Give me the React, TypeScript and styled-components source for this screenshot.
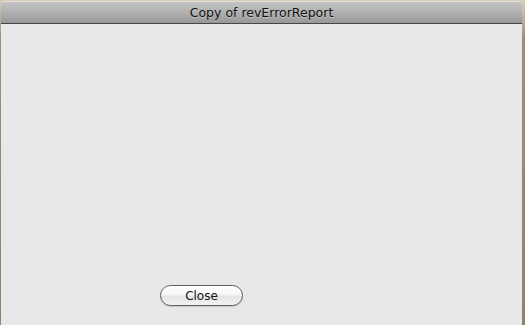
import styled, { createGlobalStyle } from 'styled-components'

const GlobalStyle = createGlobalStyle`
    html, body {
        margin: 0;
        padding: 0;
        width: 525px;
        height: 325px;
        overflow: hidden;
        background: #9a8d76;
    }
    #root {
        height: 100%;
    }
`

const Desktop = styled.div`
    width: 525px;
    height: 325px;
    padding: 1px 3px 0 1px;
    box-sizing: border-box;
    background: linear-gradient(180deg, #d9ceb6 0%, #9c8f78 12%, #8f836e 100%);
`

const Window = styled.div`
    width: 521px;
    height: 324px;
    display: flex;
    flex-direction: column;
    background: #e8e8e8;
    border-radius: 4px 4px 0 0;
    overflow: hidden;
`

const TitleBar = styled.div`
    height: 23px;
    flex-shrink: 0;
    display: flex;
    align-items: center;
    justify-content: center;
    background: linear-gradient(180deg, #c4c4c4 0%, #b2b2b2 45%, #989898 100%);
    border-top: 1px solid #dedede;
    border-bottom: 1px solid #474747;
    box-sizing: border-box;
`

const Title = styled.span`
    font-family: 'DejaVu Sans', 'Liberation Sans', sans-serif;
    font-size: 12.5px;
    color: #111;
    text-shadow: 0 1px 0 rgba(255, 255, 255, 0.35);
`

const Content = styled.div`
    flex: 1;
    display: flex;
    flex-direction: column;
    justify-content: flex-end;
    padding: 0 0 19px 159px;
`

const PillButton = styled.button`
    width: 83px;
    height: 21px;
    padding: 0;
    border: 1px solid #5e5e5e;
    border-radius: 11px;
    background: linear-gradient(180deg, #ffffff 0%, #f6f6f6 45%, #e4e4e4 55%, #f2f2f2 100%);
    box-shadow: 0 1px 1px rgba(0, 0, 0, 0.15);
    font-family: 'DejaVu Sans', 'Liberation Sans', sans-serif;
    font-size: 12px;
    color: #111;
`

export default function App() {
    return (
        <>
            <GlobalStyle />
            <Desktop>
                <Window>
                    <TitleBar>
                        <Title>Copy of revErrorReport</Title>
                    </TitleBar>
                    <Content>
                        <PillButton>Close</PillButton>
                    </Content>
                </Window>
            </Desktop>
        </>
    )
}
